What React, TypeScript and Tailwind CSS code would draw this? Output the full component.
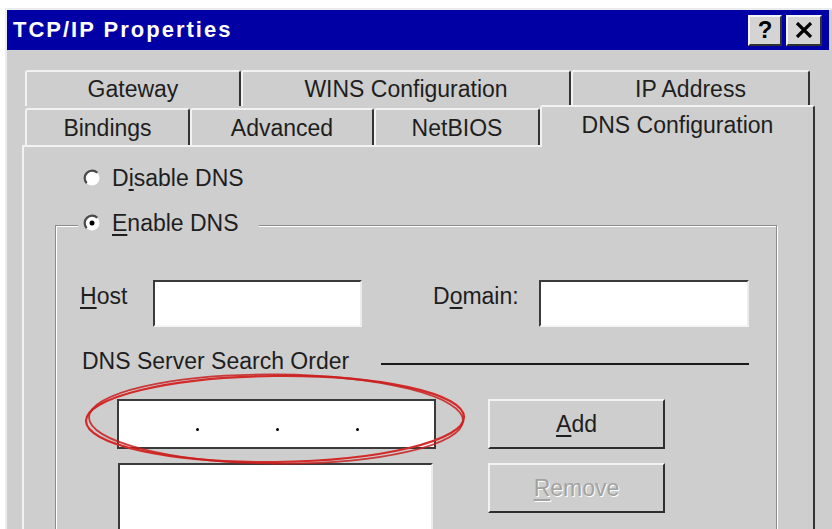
import React from "react";

const Radio = ({ checked }: { checked?: boolean }) => (
  <svg width="18" height="18" viewBox="0 0 18 18" className="shrink-0">
    <circle cx="9" cy="9" r="7.5" fill="#fff" />
    <path d="M3.7 14.3 A7.5 7.5 0 0 1 14.3 3.7" fill="none" stroke="#4a4a4a" strokeWidth="2.2" />
    {checked && <circle cx="9" cy="9" r="2.5" fill="#000" />}
  </svg>
);

export default function App() {
  return (
    <div className="w-[832px] h-[529px] bg-white overflow-hidden font-['Liberation_Sans',Arial,sans-serif] text-[23px] leading-[26px] text-[#1e1e1e]">
      <div className="ml-[5px] mt-[8px] h-[521px] w-[827px] bg-[#cecece] border-l-2 border-t-2 border-[#ececec] flex flex-col overflow-hidden">
        {/* Title bar */}
        <div className="shrink-0 h-[40px] w-[822px] bg-[#0000a4] flex items-center pl-[6px] pr-[7px]">
          <div className="flex-1 text-white font-bold text-[22px] tracking-[2px]">TCP/IP Properties</div>
          <div className="w-[34px] h-[31px] bg-[#d4d4d4] border-t-2 border-l-2 border-[#f4f4f4] border-b-2 border-r-2 border-b-[#303030] border-r-[#303030] flex items-center justify-center font-bold text-[24px] text-black">?</div>
          <div className="ml-[4px] w-[36px] h-[31px] bg-[#d4d4d4] border-t-2 border-l-2 border-[#f4f4f4] border-b-2 border-r-2 border-b-[#303030] border-r-[#303030] flex items-center justify-center">
            <svg width="18" height="16" viewBox="0 0 18 16">
              <path d="M2 1 L16 15 M16 1 L2 15" stroke="#000" strokeWidth="3.2" />
            </svg>
          </div>
        </div>

        {/* Tabs + panel */}
        <div className="ml-[15px] mt-[20px] w-[793px] flex flex-col flex-1 min-h-0">
          <div className="shrink-0 flex ml-[3px] h-[36px]">
            <div className="w-[216px] h-[36px] flex items-center justify-center border-t-2 border-l-2 border-r-2 border-t-[#f2f2f2] border-l-[#f2f2f2] border-r-[#333] rounded-t-[3px]">Gateway</div>
            <div className="w-[330px] h-[36px] flex items-center justify-center border-t-2 border-l-2 border-r-2 border-t-[#f2f2f2] border-l-[#f2f2f2] border-r-[#333] rounded-t-[3px]">WINS Configuration</div>
            <div className="w-[239px] h-[36px] flex items-center justify-center border-t-2 border-l-2 border-r-2 border-t-[#f2f2f2] border-l-[#f2f2f2] border-r-[#333] rounded-t-[3px]">IP Address</div>
          </div>
          <div className="shrink-0 flex ml-[3px] h-[39px] items-end">
            <div className="w-[165px] h-[37px] flex items-center justify-center border-t-2 border-l-2 border-r-2 border-t-[#f2f2f2] border-l-[#f2f2f2] border-r-[#333] rounded-t-[3px]">Bindings</div>
            <div className="w-[184px] h-[37px] flex items-center justify-center border-t-2 border-l-2 border-r-2 border-t-[#f2f2f2] border-l-[#f2f2f2] border-r-[#333] rounded-t-[3px]">Advanced</div>
            <div className="w-[166px] h-[37px] flex items-center justify-center border-t-2 border-l-2 border-r-2 border-t-[#f2f2f2] border-l-[#f2f2f2] border-r-[#333] rounded-t-[3px]">NetBIOS</div>
            <div className="relative z-10 w-[275px] h-[42px] -mb-[2px] pb-[4px] bg-[#cecece] flex items-center justify-center border-t-2 border-l-2 border-r-2 border-t-[#f2f2f2] border-l-[#f2f2f2] border-r-[#333] rounded-t-[3px]">DNS Configuration</div>
          </div>

          <div className="relative flex-1 min-h-0 overflow-hidden border-t-2 border-l-2 border-[#f2f2f2] border-r-2 border-r-[#333] flex flex-col">
            {/* Disable DNS */}
            <div className="shrink-0 mt-[17px] ml-[59px] h-[28px] flex items-center gap-[11px]">
              <Radio />
              <span>
                D<u className="underline-offset-[3px]">i</u>sable DNS
              </span>
            </div>

            {/* Group box */}
            <div className="shrink-0 mt-[33px] ml-[31px] w-[722px] h-[400px] border border-[#8c8c8c] shadow-[inset_1px_1px_0_#fff,1px_1px_0_#fff] flex flex-col">
              <div className="shrink-0 -mt-[17px] ml-[22px] h-[28px] w-fit bg-[#cecece] pl-[5px] pr-[20px] flex items-center gap-[11px]">
                <Radio checked />
                <span>
                  <u className="underline-offset-[3px]">E</u>nable DNS
                </span>
              </div>

              {/* Host / Domain */}
              <div className="shrink-0 mt-[43px] ml-[24px] flex items-start">
                <div className="w-[73px] mt-[3px]">
                  <u className="underline-offset-[3px]">H</u>ost
                </div>
                <div className="w-[209px] h-[47px] bg-white border-t-2 border-l-2 border-t-[#3a3a3a] border-l-[#3a3a3a] border-b-2 border-r-2 border-b-[#f4f4f4] border-r-[#ececec]" />
                <div className="ml-[71px] w-[106px] mt-[3px]">
                  D<u className="underline-offset-[3px]">o</u>main:
                </div>
                <div className="w-[210px] h-[47px] bg-white border-t-2 border-l-2 border-t-[#3a3a3a] border-l-[#3a3a3a] border-b-2 border-r-2 border-b-[#f4f4f4] border-r-[#ececec]" />
              </div>

              {/* DNS Server Search Order */}
              <div className="shrink-0 mt-[21px] ml-[26px] flex items-start">
                <div className="w-[299px] whitespace-nowrap">DNS Server Search Order</div>
                <div className="mt-[15px] w-[368px] h-[2px] bg-[#1a1a1a]" />
              </div>

              {/* IP entry + Add */}
              <div className="shrink-0 mt-[25px] ml-[61px] flex items-start">
                <div className="w-[319px] h-[50px] bg-white border-2 border-[#3a3a3a] flex items-start pt-[27px] pl-[77px] gap-[77px]">
                  <div className="w-[3px] h-[3px] rounded-full bg-black" />
                  <div className="w-[3px] h-[3px] rounded-full bg-black" />
                  <div className="w-[3px] h-[3px] rounded-full bg-black" />
                </div>
                <div className="ml-[52px] w-[177px] h-[50px] border-t-2 border-l-2 border-[#f2f2f2] border-b-2 border-r-2 border-b-[#2e2e2e] border-r-[#2e2e2e] flex items-center justify-center">
                  <span>
                    <u className="underline-offset-[3px]">A</u>dd
                  </span>
                </div>
              </div>

              {/* List + Remove */}
              <div className="shrink-0 mt-[14px] ml-[62px] flex items-start">
                <div className="w-[315px] h-[80px] bg-white border-t-2 border-l-2 border-t-[#3a3a3a] border-l-[#3a3a3a] border-r-2 border-r-[#ececec]" />
                <div className="ml-[55px] w-[177px] h-[50px] border-t-2 border-l-2 border-[#f2f2f2] border-b-2 border-r-2 border-b-[#2e2e2e] border-r-[#2e2e2e] flex items-center justify-center">
                  <span className="text-[#a2a2a2] [text-shadow:1px_1px_0_#fff]">
                    <u className="underline-offset-[3px]">R</u>emove
                  </span>
                </div>
              </div>
            </div>

            {/* Red hand-drawn ellipse annotation */}
            <svg
              className="absolute left-[53px] top-[222px] pointer-events-none"
              width="400"
              height="100"
              viewBox="0 0 400 100"
            >
              <ellipse cx="198" cy="50" rx="189" ry="43" fill="none" stroke="#d42a2a" strokeWidth="2.2" transform="rotate(-0.6 198 50)" />
              <ellipse cx="199" cy="50" rx="187" ry="44.5" fill="none" stroke="#c81e1e" strokeWidth="1.8" opacity="0.85" transform="rotate(0.5 198 50)" />
            </svg>
          </div>
        </div>
      </div>
    </div>
  );
}
